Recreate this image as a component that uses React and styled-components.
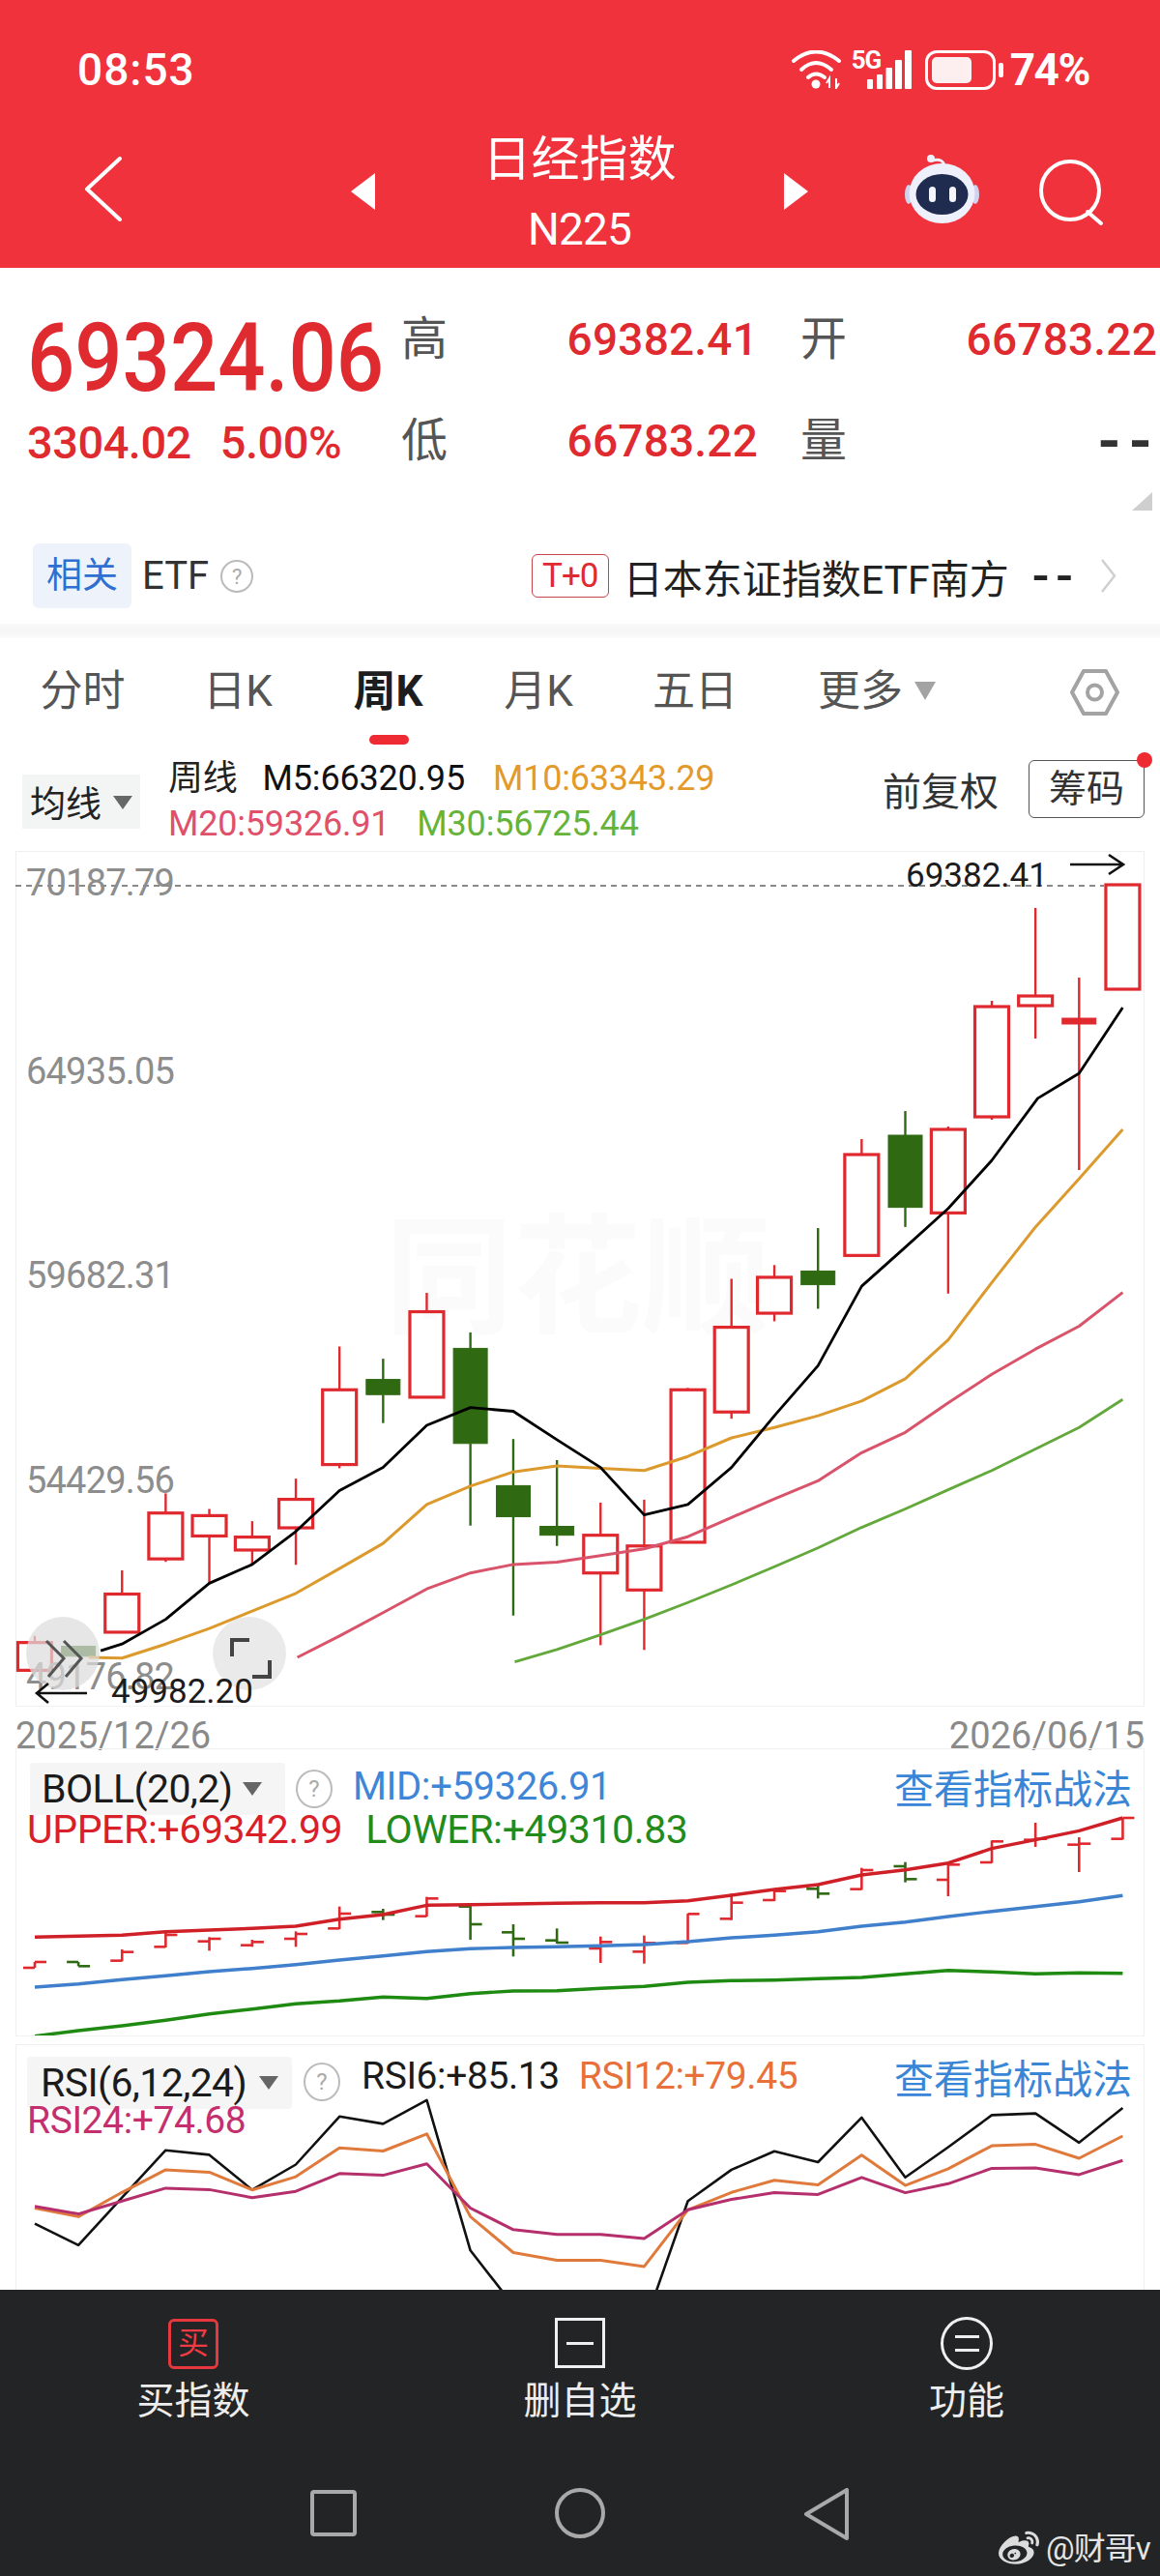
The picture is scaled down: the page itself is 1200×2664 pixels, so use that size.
import React from 'react';
import styled, { createGlobalStyle, css } from 'styled-components';
import { FaWeibo } from 'react-icons/fa';

const Global = createGlobalStyle`
  html, body { margin: 0; padding: 0; background: #fff; }
  * { box-sizing: border-box; }
  body { font-family: Roboto, "Noto Sans CJK SC", sans-serif; }
`;

const CJK = `Roboto, "Noto Sans CJK SC", sans-serif`;
const RED = '#df2a30';
const CANDLE_RED = '#e0292f';
const CANDLE_GREEN = '#2f6a12';

const narrow = css`
  display: inline-block;
  transform: scaleX(${(p) => p.$sx || 0.9});
  transform-origin: left center;
  white-space: nowrap;
`;

const Page = styled.div`
  width: 1200px;
  height: 2664px;
  overflow: hidden;
  position: relative;
  background: #fff;
  font-family: ${CJK};
`;

/* ---------- red header ---------- */
const Header = styled.header`
  height: 277px;
  background: #f0323c;
  color: #fff;
`;
const StatusBar = styled.div`
  height: 140px;
  padding: 4px 73px 0 80px;
  display: flex;
  align-items: center;
  justify-content: space-between;
`;
const Time = styled.span`
  font-size: 46px;
  font-weight: 500;
  letter-spacing: 1px;
`;
const StatusRight = styled.div`
  display: flex;
  align-items: center;
`;
const Signal = styled.div`
  position: relative;
  width: 62px;
  height: 40px;
  margin-left: 10px;
`;
const FiveG = styled.span`
  position: absolute;
  left: 0;
  top: -3px;
  font-size: 26px;
  line-height: 26px;
  font-weight: 700;
  letter-spacing: -1px;
`;
const Battery = styled.div`
  width: 73px;
  height: 41px;
  margin-left: 14px;
  border: 3px solid #fff;
  border-radius: 12px;
  padding: 4px;
`;
const BatteryFill = styled.div`
  width: 70%;
  height: 100%;
  background: #fdeef0;
  border-radius: 5px;
`;
const BatteryTip = styled.div`
  width: 5px;
  height: 15px;
  margin-left: 3px;
  background: #fff;
  border-radius: 2px;
`;
const Percent = styled.span`
  font-size: 46px;
  font-weight: 700;
  margin-left: 7px;
  letter-spacing: -1.5px;
`;
const NavRow = styled.div`
  height: 137px;
  padding-left: 88px;
  display: flex;
  align-items: flex-start;
`;
const NavSlot = styled.div`
  display: flex;
  flex: none;
  margin-left: ${(p) => p.$ml || 0}px;
  margin-top: ${(p) => p.$mt || 0}px;
`;
const TitleBlock = styled.div`
  width: 423px;
  flex: none;
  text-align: center;
`;
const Title = styled.div`
  font-size: 50px;
  line-height: 50px;
`;
const Sub = styled.div`
  margin-top: 22px;
  font-size: 46px;
  line-height: 50px;
  letter-spacing: -0.8px;
`;

/* ---------- quote ---------- */
const Quote = styled.section`
  position: relative;
  height: 268px;
  padding: 21px 0 0 28px;
  display: flex;
`;
const QuoteLeft = styled.div`
  width: 389px;
  flex: none;
  padding-top: 23px;
`;
const BigPrice = styled.div`
  font-size: 98px;
  line-height: 100px;
  font-weight: 500;
  color: ${RED};
  ${narrow}
`;
const Change = styled.div`
  display: flex;
  gap: 30px;
  font-size: 47px;
  line-height: 74px;
  font-weight: 500;
  color: ${RED};
  letter-spacing: -0.5px;
`;
const StatGrid = styled.div`
  display: grid;
  grid-template-columns: 46px 321px 46px 46px 321px;
  grid-auto-rows: 105px;
  align-items: center;
`;
const StatLabel = styled.span`
  font-size: 48px;
  color: #555;
  line-height: 50px;
  margin-left: -2px;
  grid-column: ${(p) => p.$col};
`;
const StatValue = styled.span`
  font-size: 46px;
  line-height: 50px;
  font-weight: 500;
  color: ${RED};
  text-align: right;
  letter-spacing: 0.2px;
`;
const StatDash = styled(StatValue)`
  color: #333;
  font-size: 62px;
  font-weight: 700;
  letter-spacing: 8px;
  margin-right: -3px;
`;
const Corner = styled.div`
  position: absolute;
  right: 8px;
  bottom: 17px;
  width: 0;
  height: 0;
  border-style: solid;
  border-width: 0 0 19px 21px;
  border-color: transparent transparent #cfcfcf transparent;
`;

/* ---------- ETF row ---------- */
const EtfRow = styled.section`
  height: 100px;
  padding: 17px 45px 0 34px;
  display: flex;
  align-items: flex-start;
`;
const RelatedTag = styled.div`
  width: 102px;
  height: 67px;
  background: #eef3fb;
  border-radius: 6px;
  color: #2f6fd0;
  font-size: 37px;
  line-height: 67px;
  text-align: center;
  flex: none;
`;
const EtfLabel = styled.span`
  margin-left: 11px;
  font-size: 40px;
  line-height: 67px;
  color: #333;
`;
const Help = styled.span`
  flex: none;
  width: ${(p) => p.$w || 36}px;
  height: ${(p) => p.$h || 36}px;
  margin: ${(p) => p.$m || 0};
  border: 2px solid #bbb;
  border-radius: 50%;
  color: #aaa;
  font-size: ${(p) => p.$fs || 22}px;
  display: inline-flex;
  align-items: center;
  justify-content: center;
  background: #fff;
`;
const EtfRight = styled.div`
  margin-left: auto;
  display: flex;
  align-items: center;
  height: 67px;
`;
const TZero = styled.span`
  width: 80px;
  height: 45px;
  border: 1px solid #c5434a;
  border-radius: 6px;
  color: ${RED};
  font-size: 35px;
  line-height: 43px;
  text-align: center;
  letter-spacing: -1px;
`;
const EtfName = styled.span`
  margin-left: 15px;
  font-size: 41px;
  color: #222;
  white-space: nowrap;
`;
const EtfDash = styled.span`
  margin-left: 24px;
  font-size: 52px;
  line-height: 60px;
  font-weight: 500;
  color: #222;
  letter-spacing: 7px;
`;
const Band = styled.div`
  height: 15px;
  background: linear-gradient(#fafafa, #f5f5f5 50%, #fcfcfc);
`;

/* ---------- tabs ---------- */
const Tabs = styled.nav`
  height: 115px;
  padding-left: 4px;
  display: flex;
  align-items: flex-start;
  position: relative;
`;
const Tab = styled.div`
  width: ${(p) => p.$w}px;
  flex: none;
  height: 110px;
  padding-top: 26px;
  display: flex;
  justify-content: center;
  position: relative;
  font-size: 44px;
  line-height: 58px;
  color: ${(p) => (p.$on ? '#1d1d1d' : '#555')};
  font-weight: ${(p) => (p.$on ? 700 : 400)};
  ${(p) =>
    p.$on &&
    css`
      &::after {
        content: '';
        position: absolute;
        left: 50%;
        top: 100px;
        width: 41px;
        height: 10px;
        margin-left: -20px;
        border-radius: 5px;
        background: #ee2a33;
      }
    `}
`;
const Caret = styled.span`
  display: inline-block;
  width: 0;
  height: 0;
  flex: none;
  border-style: solid;
  border-width: ${(p) => p.$h}px ${(p) => p.$w / 2}px 0;
  border-color: ${(p) => p.$c || '#666'} transparent transparent;
  margin: ${(p) => p.$m || 0};
`;
const TabGear = styled.div`
  position: absolute;
  left: 1107px;
  top: 32px;
  display: flex;
`;

/* ---------- MA legend ---------- */
const Legend = styled.section`
  height: 105px;
  position: relative;
  display: flex;
`;
const MaSelect = styled.div`
  margin: 26px 0 0 23px;
  width: 122px;
  height: 56px;
  background: #f3f4f4;
  padding-left: 8px;
  display: flex;
  align-items: center;
  font-size: 37px;
  color: #222;
  flex: none;
`;
const MaLines = styled.div`
  margin-left: 29px;
  padding-top: 7px;
  font-size: 36px;
  line-height: 47px;
`;
const MaLine = styled.div`
  display: flex;
  white-space: nowrap;
  letter-spacing: -0.2px;
`;
const MaItem = styled.span`
  color: ${(p) => p.$c};
  margin-left: ${(p) => p.$ml || 0}px;
`;
const LegendRight = styled.div`
  margin-left: auto;
  margin-right: 16px;
  padding-top: 11px;
  display: flex;
  align-items: center;
  align-self: flex-start;
`;
const Adjust = styled.span`
  font-size: 40px;
  color: #333;
`;
const ChipBtn = styled.div`
  position: relative;
  margin-left: 31px;
  width: 120px;
  height: 60px;
  border: 1px solid #555;
  border-radius: 6px;
  font-size: 39px;
  color: #333;
  text-align: center;
  line-height: 58px;
  &::after {
    content: '';
    position: absolute;
    right: -9px;
    top: -9px;
    width: 16px;
    height: 16px;
    border-radius: 50%;
    background: #ee2a33;
  }
`;

/* ---------- chart ---------- */
const ChartPanel = styled.section`
  position: relative;
  margin: 0 16px;
  height: 885px;
  border: 1px solid #efefef;
  border-bottom-color: #f2f2f2;
`;
const Drawing = styled.svg`
  position: absolute;
  left: -1px;
  top: -1px;
  display: block;
`;
const AxisText = styled.text`
  font-family: Roboto, sans-serif;
  font-size: 38px;
  letter-spacing: -0.8px;
  fill: #8d8d8d;
`;
const MarkText = styled.text`
  font-family: Roboto, sans-serif;
  font-size: 35px;
  fill: #1c1c1c;
`;
const Watermark = styled.text`
  font-family: ${CJK};
  font-size: 133px;
  font-weight: 700;
  fill: #fbfbfb;
`;
const Dates = styled.div`
  height: 43px;
  padding: 0 16px;
  display: flex;
  justify-content: space-between;
  align-items: flex-start;
  font-size: 38px;
  line-height: 60px;
  color: #8a8a8a;
  overflow: visible;
  white-space: nowrap;
`;

/* ---------- indicator panels ---------- */
const IndPanel = styled.section`
  position: relative;
  margin: ${(p) => p.$mt || 0}px 16px 0;
  height: ${(p) => p.$h}px;
  overflow: hidden;
  border: 1px solid #f0f0f0;
  border-bottom: ${(p) => (p.$open ? 'none' : '1px solid #f0f0f0')};
`;
const IndHead = styled.div`
  position: relative;
  display: flex;
  align-items: center;
  padding: ${(p) => p.$pt}px 12px 0 ${(p) => p.$pl}px;
`;
const IndSelect = styled.div`
  width: ${(p) => p.$w}px;
  height: 54px;
  flex: none;
  padding-left: ${(p) => p.$pl}px;
  background: #f5f5f5;
  border-radius: 4px;
  display: flex;
  align-items: center;
  font-size: 41px;
  color: #1b1b1b;
  letter-spacing: -0.6px;
  white-space: nowrap;
`;
const IndValue = styled.span`
  font-size: ${(p) => p.$fs || 40}px;
  color: ${(p) => p.$c};
  white-space: nowrap;
  margin-left: ${(p) => p.$ml || 0}px;
  margin-top: ${(p) => p.$mt || 0}px;
  letter-spacing: -0.4px;
`;
const IndLink = styled.span`
  margin-left: auto;
  font-size: 41px;
  color: #3a86d6;
  margin-top: ${(p) => p.$mt || 0}px;
  white-space: nowrap;
`;
const IndRow = styled.div`
  position: relative;
  display: flex;
  padding-left: ${(p) => p.$pl}px;
  margin-top: ${(p) => p.$mt}px;
  line-height: 30px;
`;

/* ---------- dark bottom ---------- */
const Dock = styled.footer`
  position: absolute;
  left: 0;
  right: 0;
  top: 2368px;
  height: 296px;
  background: #232425;
`;
const Actions = styled.div`
  height: 205px;
  padding-top: 28px;
  display: grid;
  grid-template-columns: repeat(3, 400px);
`;
const Action = styled.div`
  display: flex;
  flex-direction: column;
  align-items: center;
`;
const BuyIcon = styled.div`
  width: 52px;
  height: 52px;
  margin-top: 2px;
  border: 3px solid #e8383f;
  border-radius: 6px;
  color: #f03a44;
  font-size: 32px;
  line-height: 44px;
  text-align: center;
`;
const BoxIcon = styled.div`
  width: 52px;
  height: 52px;
  margin-top: 1px;
  border: 3px solid #f0f0f0;
  display: flex;
  align-items: center;
  justify-content: center;
  &::before {
    content: '';
    width: 28px;
    height: 3px;
    background: #eee;
  }
`;
const RoundIcon = styled.div`
  width: 54px;
  height: 55px;
  border: 3px solid #f0f0f0;
  border-radius: 50%;
  display: flex;
  flex-direction: column;
  align-items: center;
  justify-content: center;
  gap: 11px;
`;
const RoundBar = styled.span`
  width: 25px;
  height: 3px;
  background: #eee;
`;
const ActionLabel = styled.span`
  margin-top: ${(p) => p.$mt || 9}px;
  font-size: 39px;
  line-height: 46px;
  color: #ededed;
`;
const SysNav = styled.div`
  display: grid;
  grid-template-columns: repeat(3, 255px);
  justify-content: center;
  justify-items: center;
`;
const SysSquare = styled.div`
  width: 48px;
  height: 48px;
  margin-top: 2px;
  border: 4px solid #a9a9a9;
  border-radius: 4px;
`;
const SysCircle = styled.div`
  width: 52px;
  height: 52px;
  border: 4px solid #a9a9a9;
  border-radius: 50%;
`;
const Credit = styled.div`
  position: absolute;
  left: 1033px;
  top: 247px;
  display: flex;
  align-items: center;
  color: #e4e4e4;
  font-size: 33px;
  line-height: 36px;
  letter-spacing: -1px;
  white-space: nowrap;
`;
const CreditText = styled.span`
  margin-left: 7px;
`;

/* ---------- data (reference-space coordinates) ---------- */
const X = (z) => z / 1.307;
const z2 = (y) => 660 + y / 2.9;
const z3 = (y) => 1200 + y / 2.613;
const z4 = (y) => 1780 + y / 3;
const z5 = (y) => 2100 + y / 2.78;

const xs = [47, 106, 165, 224, 283, 341, 400, 459, 518, 577, 636, 694, 753, 812, 871, 930, 989, 1047, 1106, 1165, 1224, 1282, 1341, 1400, 1459, 1518];

// [wickTop, wickBottom, bodyTop, bodyBottom, colour]
const r = 'r', g = 'g';
const candles = [
  [z3(1285), z3(1378), z3(1303), z3(1378), r],
  [z3(1313), z3(1340), z3(1313), z3(1340), g],
  [z3(1108), z3(1275), z3(1172), z3(1275), r],
  [z3(900), z3(1085), z3(953), z3(1077), r],
  [z3(942), z3(1145), z3(960), z3(1015), r],
  [z3(975), z3(1090), z3(1018), z3(1053), r],
  [z3(860), z3(1093), z3(916), z3(993), r],
  [z3(503), z3(832), z3(620), z3(822), r],
  [z3(536), z3(710), z3(592), z3(633), g],
  [z3(358), z3(642), z3(409), z3(640), r],
  [z3(465), z3(987), z3(508), z3(765), g],
  [z3(753), z3(1230), z3(879), z3(963), g],
  [z3(810), z3(1042), z3(989), z3(1013), g],
  [z3(925), z3(1310), z3(1013), z3(1115), r],
  [z3(917), z3(1323), z3(1042), z3(1161), r],
  [z3(615), z3(1035), z3(620), z3(1032), r],
  [z3(320), z3(698), z3(451), z3(680), r],
  [z3(283), z3(435), z3(316), z3(413), r],
  [z3(183), z3(401), z3(299), z3(336), g],
  [1178, z3(260), 1194, z3(257), r],
  [1149, z3(180), 1174, z3(127), g],
  [1165, z3(360), 1168, z3(142), r],
  [1035, 1158, 1041, 1155, r],
  [939, 1074, 1030, 1040, r],
  [1011, 1210, 1053, 1059, 'f'],
  [915, 1023, 915, 1023, r],
];

const pts = (arr, fy) => arr.map(([x, y]) => `${X(x).toFixed(1)},${fy(y).toFixed(1)}`).join(' ');

const ma5 = `${pts([[136, 1325], [165, 1307], [224, 1240], [283, 1143], [341, 1092], [400, 1003], [459, 892], [518, 830], [577, 716], [636, 668], [694, 678], [753, 755], [812, 830], [871, 958], [930, 930], [989, 830], [1047, 690], [1106, 555], [1165, 340], [1224, 235], [1282, 130], [1341, 0]], z3)} ${pts([[1403, 1380], [1459, 1305], [1518, 1108]], z2)}`;
const ma10 = `${pts([[120, 1343], [165, 1345], [224, 1307], [283, 1265], [341, 1218], [400, 1170], [459, 1103], [518, 1035], [577, 930], [636, 880], [694, 842], [753, 826], [812, 832], [871, 838], [930, 800], [989, 750], [1047, 722], [1106, 690], [1165, 650], [1224, 590], [1282, 485], [1341, 330], [1400, 180], [1459, 50], [1518, -84]], z3)}`;
const ma20 = pts([[402, 1343], [459, 1285], [518, 1222], [577, 1158], [636, 1115], [694, 1092], [753, 1086], [812, 1068], [871, 1050], [930, 1017], [989, 965], [1047, 915], [1106, 866], [1165, 790], [1224, 735], [1282, 655], [1341, 578], [1400, 510], [1459, 448], [1518, 357]], z3);
const ma30 = pts([[696, 1355], [753, 1322], [812, 1282], [871, 1240], [930, 1195], [989, 1147], [1047, 1098], [1106, 1047], [1165, 992], [1224, 942], [1282, 890], [1341, 838], [1400, 780], [1459, 722], [1518, 646]], z3);

const bollUpper = pts([[47, 670], [165, 664], [224, 653], [283, 648], [341, 643], [400, 636], [459, 614], [518, 600], [577, 571], [636, 569], [694, 567], [753, 565], [812, 563], [871, 563], [930, 557], [989, 540], [1047, 522], [1106, 507], [1165, 477], [1224, 461], [1282, 440], [1341, 395], [1400, 368], [1459, 340], [1518, 300]], z4);
const bollMid = pts([[47, 825], [106, 815], [165, 802], [224, 790], [283, 777], [341, 767], [400, 755], [459, 741], [518, 728], [577, 715], [636, 706], [694, 702], [753, 700], [812, 697], [871, 693], [930, 684], [989, 672], [1047, 664], [1106, 653], [1165, 636], [1224, 623], [1282, 606], [1341, 590], [1400, 575], [1459, 560], [1518, 541]], z4);
const bollLower = pts([[47, 977], [106, 960], [165, 945], [224, 928], [283, 908], [341, 893], [400, 877], [459, 868], [518, 856], [577, 860], [636, 845], [694, 837], [753, 836], [812, 829], [871, 823], [930, 810], [989, 805], [1047, 803], [1106, 799], [1165, 795], [1224, 784], [1282, 773], [1341, 778], [1400, 784], [1459, 781], [1518, 782]], z4);

// [x, top, bottom, leftTick, rightTick, colour]
const ticks = [
  [47, 747, 765, 765, 747, r], [106, 747, 760, 747, 760, g], [165, 708, 745, 743, 716, r], [224, 652, 702, 700, 663, r],
  [283, 670, 712, 683, 675, r], [341, 678, 700, 695, 685, r], [400, 652, 700, 675, 660, r], [459, 575, 645, 643, 597, r],
  [518, 582, 617, 592, 600, g], [577, 545, 606, 605, 550, r], [636, 570, 678, 575, 630, g], [694, 630, 730, 655, 675, g],
  [753, 643, 690, 680, 687, g], [812, 668, 750, 705, 685, r], [871, 665, 752, 715, 688, r], [930, 597, 690, 688, 598, r],
  [989, 535, 617, 613, 563, r], [1047, 520, 558, 555, 527, r], [1106, 508, 550, 520, 535, g], [1165, 455, 523, 521, 462, r],
  [1224, 437, 500, 450, 490, g], [1282, 438, 543, 492, 445, r], [1341, 370, 440, 438, 373, r], [1400, 315, 390, 368, 365, r],
  [1459, 360, 468, 383, 380, r], [1518, 300, 367, 365, 300, r],
];

const rsiBlack = pts([[47, 555], [106, 617], [165, 480], [224, 344], [283, 357], [341, 458], [400, 385], [459, 247], [518, 268], [577, 200], [636, 632], [694, 790], [871, 848], [930, 490], [989, 400], [1047, 347], [1106, 378], [1165, 250], [1224, 422], [1282, 335], [1341, 243], [1400, 238], [1459, 322], [1518, 222]], z5);
const rsiOrange = pts([[47, 510], [106, 535], [165, 465], [224, 400], [283, 407], [341, 458], [400, 420], [459, 337], [518, 346], [577, 297], [636, 535], [694, 638], [753, 660], [812, 660], [871, 678], [930, 515], [989, 465], [1047, 430], [1106, 443], [1165, 358], [1224, 445], [1282, 397], [1341, 331], [1400, 327], [1459, 367], [1518, 303]], z5);
const rsiMagenta = pts([[47, 505], [106, 527], [165, 490], [224, 453], [283, 457], [341, 480], [400, 462], [459, 411], [518, 416], [577, 383], [636, 510], [694, 572], [753, 586], [812, 586], [871, 598], [930, 515], [989, 485], [1047, 466], [1106, 471], [1165, 422], [1224, 466], [1282, 440], [1341, 396], [1400, 395], [1459, 414], [1518, 373]], z5);

/* ---------- drawings ---------- */
const Line = ({ points, c, w = 2 }) => <polyline points={points} fill="none" stroke={c} strokeWidth={w} strokeLinejoin="round" />;

const Candle = ({ x, d }) => {
  const [t, b, bt, bb, k] = d;
  const cx = X(x);
  const c = k === g ? CANDLE_GREEN : CANDLE_RED;
  const filled = k !== r;
  return (
    <g>
      {t < bt && <line x1={cx} x2={cx} y1={t} y2={bt} stroke={c} strokeWidth="2.4" />}
      {b > bb && <line x1={cx} x2={cx} y1={bb} y2={b} stroke={c} strokeWidth="2.4" />}
      <rect x={cx - 17.5} y={bt} width="35" height={bb - bt} fill={filled ? c : 'none'} stroke={c} strokeWidth={filled ? 1 : 3.2} />
    </g>
  );
};

const WifiIcon = () => (
  <svg width="52" height="40" viewBox="818 52 52 40" fill="none" stroke="#fff" strokeLinecap="round" strokeWidth="4">
    <path d="M820 63 Q843 44 867 63" />
    <path d="M828 72 Q843 58 859 72" />
    <path d="M835 80 Q843 73 852 80" />
    <circle cx="843" cy="87" r="4.5" fill="#fff" stroke="none" />
    <path d="M857 91V81l-3 5M864 81v10l3-5" strokeWidth="2" strokeLinecap="butt" />
  </svg>
);
const SignalBars = () => (
  <svg width="62" height="40" viewBox="881 52 62 40" fill="#fff">
    <rect x="897" y="82" width="6" height="10" rx="1" />
    <rect x="907" y="77" width="6" height="15" rx="1" />
    <rect x="916.5" y="70" width="6.5" height="22" rx="1" />
    <rect x="926" y="62" width="7" height="30" rx="1" />
    <rect x="936" y="52" width="7" height="40" rx="1" />
  </svg>
);
const Robot = () => (
  <svg width="77" height="71" viewBox="0 0 77 71">
    <circle cx="27" cy="4" r="4" fill="#eef0fb" />
    <path d="M28 6 Q40 3 41 12" fill="none" stroke="#eef0fb" strokeWidth="3" />
    <ellipse cx="4" cy="41" rx="4" ry="10" fill="#cfd3ee" />
    <ellipse cx="73" cy="41" rx="4" ry="10" fill="#cfd3ee" />
    <ellipse cx="38.5" cy="40" rx="34" ry="31" fill="#eef0fb" />
    <ellipse cx="38.5" cy="41" rx="27" ry="21" fill="#1f2c50" />
    <rect x="25" y="33" width="7" height="16" rx="3.5" fill="#f5f6fb" />
    <rect x="46" y="33" width="7" height="16" rx="3.5" fill="#f5f6fb" />
  </svg>
);
const SearchIcon = () => (
  <svg width="68" height="72" viewBox="1075 165 68 72" fill="none" stroke="#fff" strokeWidth="4">
    <circle cx="1107" cy="197" r="30" />
    <path d="M1125 219 L1139 231" strokeLinecap="round" />
  </svg>
);
const Chevron = ({ w, h, c, sw }) => (
  <svg width={w} height={h} viewBox={`0 0 ${w} ${h}`} fill="none" stroke={c} strokeWidth={sw} strokeLinecap="round" strokeLinejoin="round">
    <path d={`M${w - 2} 2 L2 ${h / 2} L${w - 2} ${h - 2}`} />
  </svg>
);
const Tri = ({ right }) => (
  <svg width="25" height="38" viewBox="0 0 25 38" fill="#fff">
    <path d={right ? 'M0 0 L25 19 L0 38Z' : 'M25 0 L0 19 L25 38Z'} />
  </svg>
);
const Gear = () => (
  <svg width="51" height="48" viewBox="0 0 51 48" fill="none" stroke="#a3a3a3" strokeWidth="4">
    <path d="M14 2 H37 L49 24 L37 46 H14 L2 24 Z" strokeLinejoin="round" />
    <circle cx="25.5" cy="24" r="7.5" />
  </svg>
);
const EtfChevron = () => (
  <svg width="17" height="35" viewBox="0 0 17 35" fill="none" stroke="#cfcfcf" strokeWidth="2.5">
    <path d="M2 1 L15 17.5 L2 34" />
  </svg>
);

const App = () => (
  <Page>
    <Global />
    <Header>
      <StatusBar>
        <Time>08:53</Time>
        <StatusRight>
          <WifiIcon />
          <Signal>
            <SignalBars />
            <FiveG>5G</FiveG>
          </Signal>
          <Battery>
            <BatteryFill />
          </Battery>
          <BatteryTip />
          <Percent>74%</Percent>
        </StatusRight>
      </StatusBar>
      <NavRow>
        <NavSlot $mt={22}>
          <Chevron w={38} h={67} c="#fff" sw={4} />
        </NavSlot>
        <NavSlot $ml={237} $mt={39}>
          <Tri />
        </NavSlot>
        <TitleBlock>
          <Title>日经指数</Title>
          <Sub>N225</Sub>
        </TitleBlock>
        <NavSlot $mt={39}>
          <Tri right />
        </NavSlot>
        <NavSlot $ml={100} $mt={20}>
          <Robot />
        </NavSlot>
        <NavSlot $ml={62} $mt={25}>
          <SearchIcon />
        </NavSlot>
      </NavRow>
    </Header>

    <Quote>
      <QuoteLeft>
        <BigPrice $sx={0.885}>69324.06</BigPrice>
        <Change>
          <span>3304.02</span>
          <span>5.00%</span>
        </Change>
      </QuoteLeft>
      <StatGrid>
        <StatLabel>高</StatLabel>
        <StatValue>69382.41</StatValue>
        <StatLabel $col={4}>开</StatLabel>
        <StatValue>66783.22</StatValue>
        <StatLabel>低</StatLabel>
        <StatValue>66783.22</StatValue>
        <StatLabel $col={4}>量</StatLabel>
        <StatDash>--</StatDash>
      </StatGrid>
      <Corner />
    </Quote>

    <EtfRow>
      <RelatedTag>相关</RelatedTag>
      <EtfLabel>ETF</EtfLabel>
      <Help $w={34} $h={34} $m="17px 0 0 12px">?</Help>
      <EtfRight>
        <TZero>T+0</TZero>
        <EtfName>日本东证指数ETF南方</EtfName>
        <EtfDash>--</EtfDash>
        <NavSlot $ml={21}>
          <EtfChevron />
        </NavSlot>
      </EtfRight>
    </EtfRow>
    <Band />

    <Tabs>
      <Tab $w={163}>分时</Tab>
      <Tab $w={158}>日K</Tab>
      <Tab $w={153} $on>周K</Tab>
      <Tab $w={158}>月K</Tab>
      <Tab $w={166}>五日</Tab>
      <Tab $w={210}>
        更多
        <Caret $w={23} $h={19} $c="#a3a3a3" $m="19px 0 0 12px" />
      </Tab>
      <TabGear>
        <Gear />
      </TabGear>
    </Tabs>

    <Legend>
      <MaSelect>
        均线
        <Caret $w={20} $h={14} $c="#666" $m="2px 0 0 12px" />
      </MaSelect>
      <MaLines>
        <MaLine>
          <MaItem $c="#222">周线</MaItem>
          <MaItem $c="#111" $ml={26}>M5:66320.95</MaItem>
          <MaItem $c="#e39a2b" $ml={29}>M10:63343.29</MaItem>
        </MaLine>
        <MaLine>
          <MaItem $c="#e0506a">M20:59326.91</MaItem>
          <MaItem $c="#66b33a" $ml={28}>M30:56725.44</MaItem>
        </MaLine>
      </MaLines>
      <LegendRight>
        <Adjust>前复权</Adjust>
        <ChipBtn>筹码</ChipBtn>
      </LegendRight>
    </Legend>

    <ChartPanel>
      <Drawing width="1168" height="885" viewBox="16 880 1168 885">
        <Watermark x="398" y="1368">同花顺</Watermark>
        <line x1="16" x2="1142" y1="916" y2="916" stroke="#8a8a8a" strokeWidth="2" strokeDasharray="6 5" />
        <AxisText x="27" y="926">70187.79</AxisText>
        <AxisText x="27" y="1121">64935.05</AxisText>
        <AxisText x="27" y="1332">59682.31</AxisText>
        <AxisText x="27" y="1544">54429.56</AxisText>
        {candles.map((d, i) => (
          <Candle key={i} x={xs[i]} d={d} />
        ))}
        <Line points={ma20} c="#d9536a" w={3} />
        <Line points={ma30} c="#62a83a" w={2.8} />
        <Line points={ma10} c="#dc9a2c" w={3} />
        <Line points={ma5} c="#000" w={2.8} />
        <MarkText x="937" y="917">69382.41</MarkText>
        <path d="M1107 894 H1161 M1147 884 L1162 894 L1147 904" fill="none" stroke="#111" strokeWidth="2.6" />
        <AxisText x="27" y="1747">49176.82</AxisText>
        <circle cx="65" cy="1710" r="38" fill="#dcdcdc" fillOpacity="0.72" />
        <circle cx="258" cy="1710" r="38" fill="#dcdcdc" fillOpacity="0.6" />
        <path d="M48 1697 L66 1715 L50 1734 M66 1697 L84 1715 L68 1734" fill="none" stroke="#555" strokeWidth="3" />
        <path d="M258 1696 H240 V1713 M279 1717 V1734 H261" fill="none" stroke="#444" strokeWidth="4" />
        <MarkText x="115" y="1761">49982.20</MarkText>
        <path d="M90 1751 H39 M50 1741 L38 1751 L50 1761" fill="none" stroke="#111" strokeWidth="2.6" />
      </Drawing>
    </ChartPanel>
    <Dates>
      <span>2025/12/26</span>
      <span>2026/06/15</span>
    </Dates>

    <IndPanel $h={298}>
      <Drawing width="1168" height="298" viewBox="16 1808 1168 298">
        {ticks.map(([x, t, b, lt, rt, k], i) => {
          const cx = X(x);
          const c = k === g ? '#2f6a12' : '#e0292f';
          return (
            <g key={i} stroke={c} strokeWidth="2.6" fill="none">
              <line x1={cx} x2={cx} y1={z4(t)} y2={z4(b)} />
              <line x1={cx - 12} x2={cx} y1={z4(lt)} y2={z4(lt)} />
              <line x1={cx} x2={cx + 12} y1={z4(rt)} y2={z4(rt)} />
            </g>
          );
        })}
        <Line points={bollMid} c="#3f7fcb" w={3.4} />
        <Line points={bollLower} c="#1f8a12" w={3.4} />
        <Line points={bollUpper} c="#cf2028" w={3.4} />
      </Drawing>
      <IndHead $pt={13} $pl={14}>
        <IndSelect $w={264} $pl={12}>
          BOLL(20,2)
          <Caret $w={20} $h={14} $c="#666" $m="0 0 0 11px" />
        </IndSelect>
        <Help $w={38} $h={40} $m="0 0 0 11px" $fs={24}>?</Help>
        <IndValue $c="#3f86d8" $ml={21} $mt={-5}>MID:+59326.91</IndValue>
        <IndLink $mt={-5}>查看指标战法</IndLink>
      </IndHead>
      <IndRow $pl={11} $mt={0}>
        <IndValue $c="#d92028" $fs={41}>UPPER:+69342.99</IndValue>
        <IndValue $c="#228b1a" $fs={41} $ml={24}>LOWER:+49310.83</IndValue>
      </IndRow>
    </IndPanel>

    <IndPanel $mt={8} $h={254} $open>
      <Drawing width="1168" height="254" viewBox="16 2114 1168 254">
        <Line points={rsiBlack} c="#111" w={2.6} />
        <Line points={rsiOrange} c="#e07a3c" w={3} />
        <Line points={rsiMagenta} c="#b52f6c" w={3} />
      </Drawing>
      <IndHead $pt={12} $pl={11}>
        <IndSelect $w={274} $pl={14}>
          RSI(6,12,24)
          <Caret $w={20} $h={14} $c="#666" $m="0 0 0 13px" />
        </IndSelect>
        <Help $w={38} $h={40} $m="-2px 0 0 12px" $fs={24}>?</Help>
        <IndValue $c="#1b1b1b" $fs={39} $ml={22} $mt={-14}>RSI6:+85.13</IndValue>
        <IndValue $c="#e8703a" $fs={39} $ml={20} $mt={-14}>RSI12:+79.45</IndValue>
        <IndLink $mt={-15}>查看指标战法</IndLink>
      </IndHead>
      <IndRow $pl={11} $mt={-3}>
        <IndValue $c="#c42f6e" $fs={39}>RSI24:+74.68</IndValue>
      </IndRow>
    </IndPanel>

    <Dock>
      <Actions>
        <Action>
          <BuyIcon>买</BuyIcon>
          <ActionLabel $mt={10}>买指数</ActionLabel>
        </Action>
        <Action>
          <BoxIcon />
          <ActionLabel $mt={11}>删自选</ActionLabel>
        </Action>
        <Action>
          <RoundIcon>
            <RoundBar />
            <RoundBar />
          </RoundIcon>
          <ActionLabel>功能</ActionLabel>
        </Action>
      </Actions>
      <SysNav>
        <SysSquare />
        <SysCircle />
        <svg width="48" height="54" viewBox="0 0 48 54" fill="none" stroke="#a9a9a9" strokeWidth="4" strokeLinejoin="round">
          <path d="M45 2 V52 L3 27 Z" />
        </svg>
      </SysNav>
      <Credit>
        <FaWeibo size={42} color="#dcdcdc" />
        <CreditText>@财哥v</CreditText>
      </Credit>
    </Dock>
  </Page>
);

export default App;
